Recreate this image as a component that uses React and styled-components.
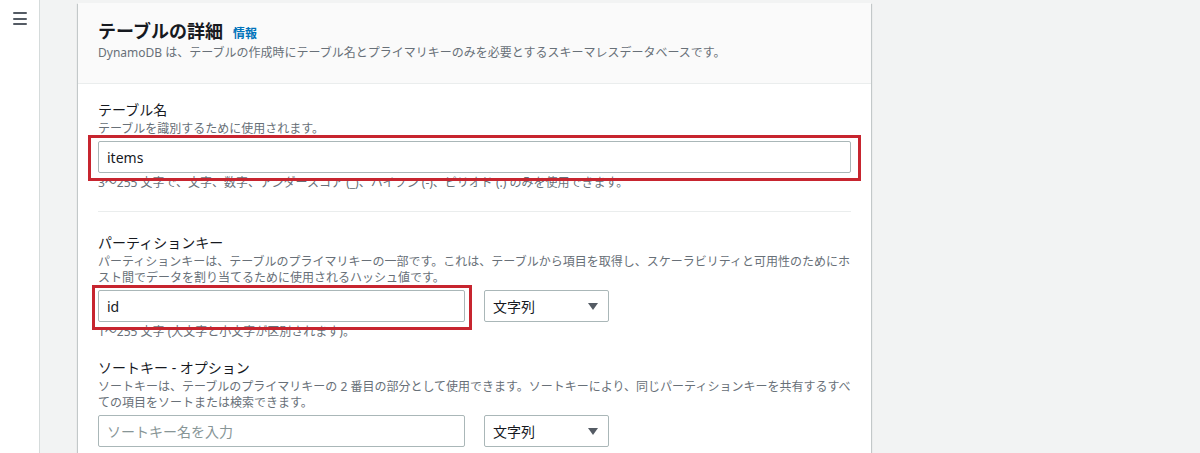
import styled, { createGlobalStyle } from "styled-components";

const GlobalStyle = createGlobalStyle`
  * { box-sizing: border-box; }
  html, body {
    margin: 0;
    padding: 0;
    height: 100%;
    overflow: hidden;
  }
  body {
    font-family: "Noto Sans", "Noto Sans CJK JP", sans-serif;
    color: #16191f;
    background: #f2f3f3;
  }
`;

export default function App() {
  return (
    <>
      <GlobalStyle />
      <Page>
        <Sidebar>
          <Burger aria-label="menu">
            <span />
            <span />
            <span />
          </Burger>
        </Sidebar>
        <Main>
          <Card>
            <CardHeader>
              <TitleRow>
                <Title>テーブルの詳細</Title>
                <InfoLink>情報</InfoLink>
              </TitleRow>
              <HeaderDesc>
                DynamoDB は、テーブルの作成時にテーブル名とプライマリキーのみを必要とするスキーマレスデータベースです。
              </HeaderDesc>
            </CardHeader>
            <CardBody>
              <Section $first>
                <Label>テーブル名</Label>
                <Desc>テーブルを識別するために使用されます。</Desc>
                <Row>
                  <InputWrap $full>
                    <TextInput defaultValue="items" />
                    <Highlight $t={-6} $r={-10} $b={-8} $l={-10} />
                  </InputWrap>
                </Row>
                <Hint>
                  3〜255 文字で、文字、数字、アンダースコア (_)、ハイフン (-)、ピリオド (.) のみを使用できます。
                </Hint>
              </Section>
              <Section>
                <Label>パーティションキー</Label>
                <Desc>
                  パーティションキーは、テーブルのプライマリキーの一部です。これは、テーブルから項目を取得し、スケーラビリティと可用性のためにホスト間でデータを割り当てるために使用されるハッシュ値です。
                </Desc>
                <Row>
                  <InputWrap>
                    <TextInput defaultValue="id" />
                    <Highlight $t={-5} $r={-7} $b={-8} $l={-6} />
                  </InputWrap>
                  <Select>
                    文字列
                    <Caret />
                  </Select>
                </Row>
                <Hint>1〜255 文字 (大文字と小文字が区別されます)。</Hint>
              </Section>
              <Section $follow>
                <Label>ソートキー - オプション</Label>
                <Desc>
                  ソートキーは、テーブルのプライマリキーの 2 番目の部分として使用できます。ソートキーにより、同じパーティションキーを共有するすべての項目をソートまたは検索できます。
                </Desc>
                <Row>
                  <InputWrap>
                    <TextInput placeholder="ソートキー名を入力" />
                  </InputWrap>
                  <Select>
                    文字列
                    <Caret />
                  </Select>
                </Row>
              </Section>
            </CardBody>
          </Card>
        </Main>
      </Page>
    </>
  );
}

const Page = styled.div`
  display: flex;
  width: 100vw;
  height: 100vh;
  background: #f2f3f3;
`;

const Sidebar = styled.aside`
  width: 40px;
  flex-shrink: 0;
  background: #ffffff;
  border-right: 1px solid #d5dbdb;
  padding: 12px 0 0 13px;
`;

const Burger = styled.div`
  width: 14px;
  height: 13px;
  display: flex;
  flex-direction: column;
  justify-content: space-between;

  span {
    display: block;
    height: 2px;
    background: #545b64;
    border-radius: 1px;
  }
`;

const Main = styled.main`
  flex: 1;
  padding: 3px 0 0 38px;
`;

const Card = styled.section`
  width: 793px;
  background: #ffffff;
  box-shadow: 0 1px 1px 0 rgba(0, 28, 36, 0.3), 1px 1px 1px 0 rgba(0, 28, 36, 0.15),
    -1px 1px 1px 0 rgba(0, 28, 36, 0.15);
`;

const CardHeader = styled.header`
  background: #fafafa;
  border-bottom: 1px solid #eaeded;
  padding: 16px 20px 22px;
`;

const TitleRow = styled.div`
  display: flex;
  align-items: baseline;
  gap: 10px;
`;

const Title = styled.h2`
  margin: 0;
  font-size: 18px;
  line-height: 24px;
  font-weight: 700;
  color: #16191f;
`;

const InfoLink = styled.a`
  font-size: 12px;
  font-weight: 700;
  color: #0073bb;
  cursor: pointer;
`;

const HeaderDesc = styled.p`
  margin: 2px 0 0;
  font-size: 12px;
  line-height: 16px;
  color: #687078;
`;

const CardBody = styled.div`
  padding: 0 20px 40px;
`;

const Section = styled.div`
  padding: ${(p) => (p.$first ? "15px 0 20px" : p.$follow ? "17px 0 0" : "20px 0 0")};
  border-bottom: ${(p) => (p.$first ? "1px solid #eaeded" : "none")};
`;

const Label = styled.div`
  font-size: 14px;
  line-height: 22px;
  color: #16191f;
`;

const Desc = styled.div`
  font-size: 12px;
  line-height: 16px;
  color: #687078;
`;

const Row = styled.div`
  display: flex;
  gap: 19px;
  margin-top: 4px;
`;

const InputWrap = styled.div`
  position: relative;
  width: ${(p) => (p.$full ? "100%" : "367px")};
`;

const TextInput = styled.input`
  display: block;
  width: 100%;
  height: 32px;
  border: 1px solid #aab7b8;
  border-radius: 2px;
  padding: 0 8px;
  font-family: "Noto Sans", "Noto Sans CJK JP", sans-serif;
  font-size: 14px;
  color: #16191f;
  background: #ffffff;
  outline: none;

  &::placeholder {
    color: #879596;
  }
`;

const Highlight = styled.div`
  position: absolute;
  top: ${(p) => p.$t}px;
  right: ${(p) => p.$r}px;
  bottom: ${(p) => p.$b}px;
  left: ${(p) => p.$l}px;
  border: 3px solid #c7252f;
  pointer-events: none;
  z-index: 2;
`;

const Select = styled.div`
  width: 125px;
  height: 32px;
  border: 1px solid #aab7b8;
  border-radius: 2px;
  padding: 0 10px 0 8px;
  display: flex;
  align-items: center;
  justify-content: space-between;
  font-size: 14px;
  color: #16191f;
  background: #ffffff;
`;

const Caret = styled.span`
  width: 0;
  height: 0;
  border-left: 5px solid transparent;
  border-right: 5px solid transparent;
  border-top: 7px solid #545b64;
`;

const Hint = styled.div`
  margin-top: 2px;
  font-size: 12px;
  line-height: 16px;
  color: #687078;
`;
